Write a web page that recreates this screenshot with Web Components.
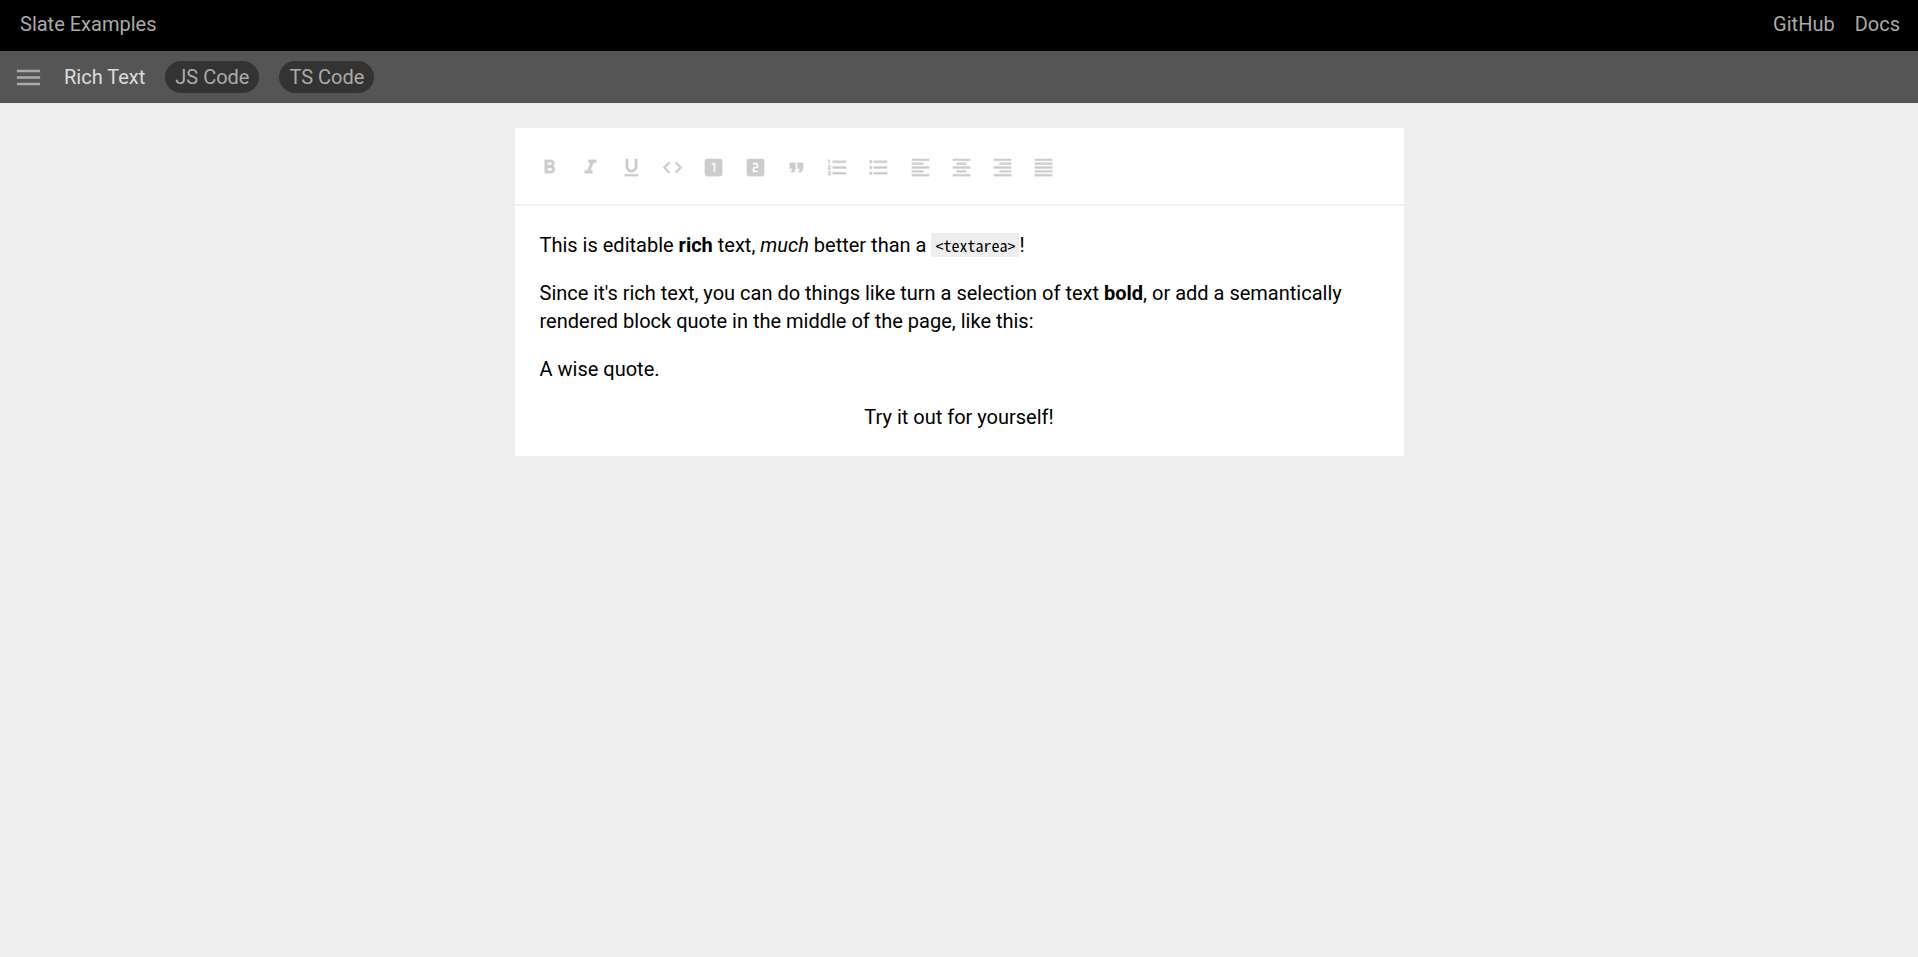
<!DOCTYPE html>
<html lang="en">
<head>
<meta charset="utf-8">
<meta name="viewport" content="width=device-width, initial-scale=1">
<title>Slate Examples</title>
<style>
  html { background: #eee; }
  body { margin: 0; font: 20px/28px Roboto, sans-serif; color: #000; }
</style>
</head>
<body>
<site-header>
  <header-link href="#examples">Slate Examples</header-link>
  <header-link slot="links" href="#github">GitHub</header-link>
  <header-link slot="links" href="#docs">Docs</header-link>
</site-header>
<example-bar name="Rich Text">
  <code-pill href="#js">JS Code</code-pill>
  <code-pill href="#ts">TS Code</code-pill>
</example-bar>
<rich-editor>
  <editor-toolbar slot="toolbar"></editor-toolbar>
  <text-block>This is editable <b>rich</b> text, <i>much</i> better than a <inline-code>&lt;textarea&gt;</inline-code>!</text-block>
  <text-block>Since it's rich text, you can do things like turn a selection of text <b>bold</b>, or add a semantically rendered block quote in the middle of the page, like this:</text-block>
  <text-block>A wise quote.</text-block>
  <text-block align="center">Try it out for yourself!</text-block>
</rich-editor>

<script>
const define = (name, render) => customElements.define(name, class extends HTMLElement {
  connectedCallback() {
    if (this.shadowRoot) return;
    this.attachShadow({ mode: 'open' }).innerHTML = render(this);
  }
});

/* 24-unit icon outlines */
const icons = {
  menu: 'M3 18h18v-2H3v2zm0-5h18v-2H3v2zm0-7v2h18V6H3z',
  bold: 'M15.6 10.79c.97-.67 1.65-1.77 1.65-2.79 0-2.26-1.75-4-4-4H7v14h7.04c2.09 0 3.71-1.7 3.71-3.79 0-1.52-.86-2.82-2.15-3.42zM10 6.5h3c.83 0 1.5.67 1.5 1.5s-.67 1.5-1.5 1.5h-3v-3zm3.5 9H10v-3h3.5c.83 0 1.5.67 1.5 1.5s-.67 1.5-1.5 1.5z',
  italic: 'M10 4v3h2.21l-3.42 8H6v3h8v-3h-2.21l3.42-8H18V4z',
  underlined: 'M12 17c3.31 0 6-2.69 6-6V3h-2.5v8c0 1.93-1.57 3.5-3.5 3.5S8.5 12.93 8.5 11V3H6v8c0 3.31 2.69 6 6 6zm-7 2v2h14v-2H5z',
  code: 'M9.4 16.6 4.8 12l4.6-4.6L8 6l-6 6 6 6 1.4-1.4zm5.2 0 4.6-4.6-4.6-4.6L16 6l6 6-6 6-1.4-1.4z',
  'heading one': 'M19 3H5c-1.1 0-2 .9-2 2v14c0 1.1.9 2 2 2h14c1.1 0 2-.9 2-2V5c0-1.1-.9-2-2-2zm-5 14h-2V9h-2V7h4v10z',
  'heading two': 'M19 3H5c-1.1 0-2 .9-2 2v14c0 1.1.9 2 2 2h14c1.1 0 2-.9 2-2V5c0-1.1-.9-2-2-2zm-4 8c0 1.11-.9 2-2 2h-2v2h4v2H9v-4c0-1.11.9-2 2-2h2V9H9V7h4c1.1 0 2 .89 2 2v2z',
  'block quote': 'M6 17h3l2-4V7H5v6h3zm8 0h3l2-4V7h-6v6h3z',
  'numbered list': 'M2 17h2v.5H3v1h1v.5H2v1h3v-4H2v1zm1-9h1V4H2v1h1v3zm-1 3h1.8L2 13.1v.9h3v-1H3.2L5 10.9V10H2v1zm5-6v2h14V5H7zm0 14h14v-2H7v2zm0-6h14v-2H7v2z',
  'bulleted list': 'M4 10.5c-.83 0-1.5.67-1.5 1.5s.67 1.5 1.5 1.5 1.5-.67 1.5-1.5-.67-1.5-1.5-1.5zm0-6c-.83 0-1.5.67-1.5 1.5S3.17 7.5 4 7.5 5.5 6.83 5.5 6 4.83 4.5 4 4.5zm0 12c-.83 0-1.5.68-1.5 1.5s.68 1.5 1.5 1.5 1.5-.68 1.5-1.5-.67-1.5-1.5-1.5zM7 19h14v-2H7v2zm0-6h14v-2H7v2zm0-8v2h14V5H7z',
  'align left': 'M15 15H3v2h12v-2zm0-8H3v2h12V7zM3 13h18v-2H3v2zm0 8h18v-2H3v2zM3 3v2h18V3H3z',
  'align center': 'M7 15v2h10v-2H7zm-4 6h18v-2H3v2zm0-8h18v-2H3v2zm4-6v2h10V7H7zM3 3v2h18V3H3z',
  'align right': 'M3 21h18v-2H3v2zm6-4h12v-2H9v2zm-6-4h18v-2H3v2zm6-4h12V7H9v2zM3 3v2h18V3H3z',
  'align justify': 'M3 21h18v-2H3v2zm0-4h18v-2H3v2zm0-4h18v-2H3v2zm0-4h18V7H3v2zM3 3v2h18V3H3z'
};

define('icon-button', el => `
  <style>
    :host { display: block; }
    button { display: block; margin: 0; padding: 0; border: 0; background: none; color: inherit; cursor: pointer; }
    svg { display: block; width: var(--icon-size, 23px); height: var(--icon-size, 23px); fill: currentColor; stroke: currentColor; stroke-width: var(--icon-weight, 0.4); }
  </style>
  <button type="button" aria-label="${el.getAttribute('icon')}">
    <svg viewBox="0 0 24 24" aria-hidden="true"><path d="${icons[el.getAttribute('icon')]}"/></svg>
  </button>`);

define('header-link', el => `
  <style>
    :host { display: block; }
    a { color: #aaa; text-decoration: none; }
    a:hover { color: #fff; }
  </style>
  <a href="${el.getAttribute('href')}"><slot></slot></a>`);

define('site-header', () => `
  <style>
    :host { display: block; background: #000; }
    header { display: flex; justify-content: space-between; padding: 10px 18px 13px 20px; }
    nav { display: flex; gap: 20px; }
  </style>
  <header><slot></slot><nav><slot name="links"></slot></nav></header>`);

define('code-pill', el => `
  <style>
    :host { display: block; }
    a { display: block; padding: 2px 10px; border-radius: 16px; background: #333; color: #aaa; text-decoration: none; }
    a:hover { color: #fff; }
  </style>
  <a href="${el.getAttribute('href')}"><slot></slot></a>`);

define('example-bar', el => `
  <style>
    :host { display: block; background: #555; }
    div { display: flex; align-items: center; gap: 20px; padding: 10px 13px; color: #ddd; }
    icon-button { --icon-size: 31px; --icon-weight: 0; color: #aaa; }
  </style>
  <div><icon-button icon="menu"></icon-button><span>${el.getAttribute('name')}</span><slot></slot></div>`);

define('editor-toolbar', () => `
  <style>
    :host { display: block; padding: 28px 23px 25px; border-bottom: 2px solid #eee; color: #ccc; }
    div { display: grid; grid-template-columns: repeat(13, 1fr); max-width: 536px; }
  </style>
  <div role="toolbar" aria-label="Formatting">${
    Object.keys(icons).filter(n => n !== 'menu').map(n => `<icon-button icon="${n}"></icon-button>`).join('')
  }</div>`);

define('inline-code', () => `
  <style>
    :host { display: inline; }
    code { padding: 0 4px; background: #eee; font: 16px/16px "Noto Sans Mono CJK SC", "Liberation Mono", monospace; }
  </style><code><slot></slot></code>`);

define('text-block', el => `
  <style>
    :host { display: block; text-align: ${el.getAttribute('align') || 'left'}; }
    p { margin: 0; }
  </style><p><slot></slot></p>`);

define('rich-editor', () => `
  <style>
    :host { display: block; max-width: 889px; margin: 25px auto; background: #fff; }
    .content { display: grid; gap: 20px; padding: 25px; outline: none; }
  </style>
  <slot name="toolbar"></slot>
  <div class="content" role="textbox" aria-multiline="true" aria-label="Rich text" contenteditable="true"><slot></slot></div>`);
</script>
</body>
</html>
